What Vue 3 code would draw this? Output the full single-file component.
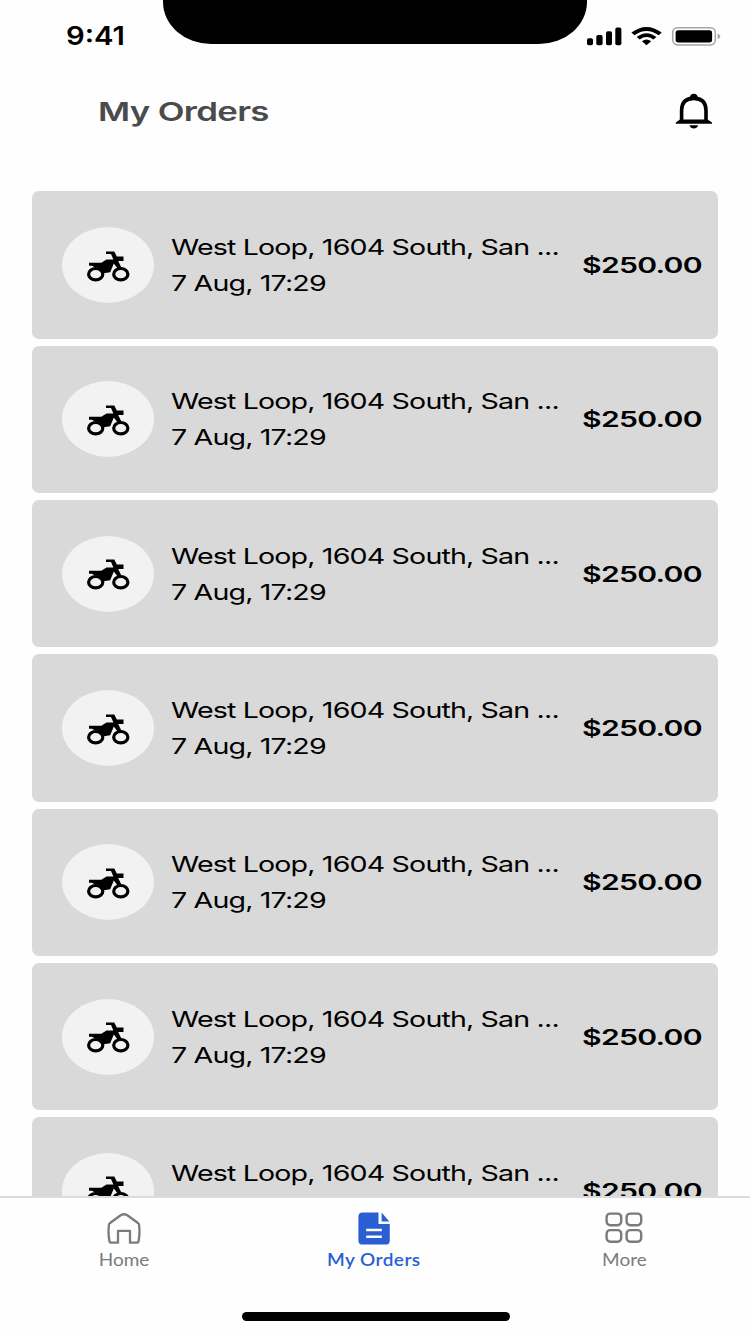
<template>
  <div class="screen">
    <header class="status-bar">
      <span class="time"><span class="stretch">9:41</span></span>
      <div class="notch"></div>
      <svg class="status-icons" viewBox="586 26 136 20" aria-hidden="true">
        <rect x="587" y="38.3" width="6" height="6.9" rx="1.8" />
        <rect x="596.3" y="35" width="6.3" height="10.2" rx="1.8" />
        <rect x="606" y="31.3" width="6" height="13.9" rx="1.8" />
        <rect x="615.3" y="27.6" width="6.1" height="17.6" rx="1.8" />
        <path d="M631.4 32.6Q646.5 21.4 661.7 32.6L658.7 35.3Q646.5 26.6 634.4 35.3Z" />
        <path d="M636.6 37Q646.5 29.3 656.5 37L653.4 39.5Q646.5 34.6 639.7 39.5Z" />
        <path d="M641.9 41.3Q646.5 37.9 651.2 41.3L646.5 45.3Z" />
        <rect x="672.7" y="27.7" width="42.6" height="17.2" rx="4.8" fill="none" stroke="#a6a6a6" stroke-width="1.5" />
        <rect x="675.6" y="30.3" width="36.5" height="12.1" rx="2.6" />
        <path d="M717.6 33.4Q720.2 34.2 720.2 36.3T717.6 39.3Z" fill="#a6a6a6" />
      </svg>
    </header>

    <div class="title-bar">
      <h1><span class="stretch">My Orders</span></h1>
      <button class="bell" aria-label="Notifications">
        <svg viewBox="675 93 38 36" aria-hidden="true">
          <path d="M681.6 121V110.5C681.6 102 686.5 98.4 693.8 98.4S706 102 706 110.5V121" fill="none" stroke="#000" stroke-width="3.6" />
          <path d="M689.6 98.5C689.6 95.6 691.2 93.8 693.8 93.8S698 95.6 698 98.5Z" />
          <path d="M680 119.6H707.6L712 122.4V123.7H675.8V122.4Z" />
          <path d="M689.5 125.2H698.1Q697 128.5 693.8 128.5T689.5 125.2Z" />
        </svg>
      </button>
    </div>

    <main class="orders">
      <article v-for="order in orders" :key="order.id" class="order">
        <div class="avatar">
          <svg viewBox="86 250 44 32" aria-hidden="true">
            <ellipse cx="95.7" cy="273.2" rx="7.1" ry="5.7" fill="none" stroke="#000" stroke-width="3.2" />
            <ellipse cx="120.8" cy="273.2" rx="7.1" ry="5.7" fill="none" stroke="#000" stroke-width="3.2" />
            <path d="M89 261.8H101.3L106.5 258.4H113.4L111 253.1H106V250.5H114.3L116.8 255.5H123.5V260H118.2L121.7 267.2L118.4 268.4L113.8 262.5L110.2 271.2L103.6 272.2L99.5 267L95 266.6L92 264.8H89Z" />
          </svg>
        </div>
        <div class="details">
          <p><span class="stretch">{{ order.address }}</span></p>
          <p><span class="stretch">{{ order.date }}</span></p>
        </div>
        <strong class="price"><span class="stretch">{{ order.price }}</span></strong>
      </article>
    </main>

    <nav class="tabs">
      <a class="tab">
        <svg viewBox="106 1213 36 33" aria-hidden="true">
          <path d="M118 1243.7V1231.9H130V1243.7H137.2Q138.2 1243.7 138.5 1242.7Q140.2 1234 139 1225.6Q138.8 1224.7 138 1224L127.3 1216.2Q124 1214.3 120.7 1216.2L110 1224Q109.2 1224.7 109 1225.6Q107.8 1234 109.5 1242.7Q109.8 1243.7 110.8 1243.7Z" fill="none" stroke="#7b7b7b" stroke-width="2.3" stroke-linejoin="round" />
        </svg>
        <span class="label"><span class="stretch">Home</span></span>
      </a>
      <a class="tab active">
        <svg viewBox="356 1212 36 33" aria-hidden="true">
          <path d="M362.6 1212.4H378.5V1224H389.8V1240.4Q389.8 1244.6 385.3 1244.6H362.8Q358.4 1244.6 358.4 1240.4V1216.5Q358.4 1212.4 362.6 1212.4Z" fill="#2a5fd3" />
          <path d="M381.6 1212.6V1221.4H389.3Z" fill="#2a5fd3" />
          <path d="M366.2 1230.1H381.8M366.2 1236.8H381.8" stroke="#fff" stroke-width="2.5" />
        </svg>
        <span class="label"><span class="stretch">My Orders</span></span>
      </a>
      <a class="tab">
        <svg class="grid-icon" viewBox="605 1213 38 32" aria-hidden="true">
          <g fill="none" stroke="#7b7b7b" stroke-width="2.4">
            <rect x="606.6" y="1214.6" width="14.6" height="11.6" rx="3.6" />
            <rect x="626.6" y="1214.6" width="14.6" height="11.6" rx="3.6" />
            <rect x="606.6" y="1231.1" width="14.6" height="11.6" rx="3.6" />
            <rect x="626.6" y="1231.1" width="14.6" height="11.6" rx="3.6" />
          </g>
        </svg>
        <span class="label"><span class="stretch">More</span></span>
      </a>
      <div class="home-indicator"></div>
    </nav>
  </div>
</template>

<script setup>
import { ref } from 'vue'

const orders = ref(
  Array.from({ length: 7 }, (_, i) => ({
    id: i + 1,
    address: 'West Loop, 1604 South, San ...',
    date: '7 Aug, 17:29',
    price: '$250.00'
  }))
)
</script>

<style>
body {
  background: #fff;
}
</style>

<style scoped>
.screen {
  display: flex;
  flex-direction: column;
  width: 750px;
  height: 1334px;
  overflow: hidden;
  background: #fefefe;
  color: #000;
  font-family: Inter, sans-serif;
}

/* wide lettering */
.stretch {
  display: inline-block;
  white-space: nowrap;
  transform-origin: left center;
}

.status-bar {
  display: flex;
  flex: none;
  height: 44px;
}

.time {
  width: 97px;
  padding-left: 66px;
  font-size: 25px;
  font-weight: 600;
  line-height: 72px;
}

.time .stretch {
  transform: scaleX(1.17);
}

.notch {
  width: 424px;
  height: 44.4px;
  background: #000;
  border-radius: 0 0 48px 48px / 0 0 42px 42px;
}

.status-icons {
  width: 136px;
  height: 20px;
  margin-top: 26px;
  margin-left: -1px;
}

.title-bar {
  display: flex;
  flex: none;
  justify-content: space-between;
  height: 147px;
  padding: 49px 37px 0 98px;
  box-sizing: border-box;
}

h1 {
  margin: 0;
  color: #4b4b4b;
  font-size: 26px;
  font-weight: 600;
  letter-spacing: -0.5px;
  line-height: 38px;
}

h1 .stretch {
  transform: scaleX(1.34);
}

.bell {
  width: 38px;
  height: 36px;
  padding: 0;
  border: none;
  background: none;
}

.bell svg {
  display: block;
}

.orders {
  display: flex;
  flex: 1;
  flex-direction: column;
  gap: 6.8px;
  min-height: 0;
  padding: 0.35px 32px 0;
  overflow: hidden;
}

.order {
  display: flex;
  flex: none;
  align-items: center;
  height: 147.53px;
  padding-left: 30px;
  box-sizing: border-box;
  border-radius: 7px;
  background: #d9d9d9;
}

.avatar {
  display: flex;
  align-items: center;
  justify-content: center;
  width: 92px;
  height: 76px;
  border-radius: 50%;
  background: #f2f2f2;
}

.avatar svg {
  width: 44px;
  height: 32px;
  margin-top: 3px;
}

.details {
  width: 412px;
  margin-left: 16.5px;
}

.details p {
  margin: 0;
  font-size: 22px;
  letter-spacing: -0.65px;
  line-height: 36px;
}

.details .stretch {
  transform: scaleX(1.3);
}

.price {
  margin-left: -0.5px;
  font-size: 21.5px;
  font-weight: 600;
  letter-spacing: -0.5px;
}

.price .stretch {
  transform: scaleX(1.4);
}

.tabs {
  display: grid;
  flex: none;
  grid-template-columns: repeat(3, 250px);
  grid-template-rows: 114px 9px;
  height: 138px;
  box-sizing: border-box;
  border-top: 2px solid #dcdcdc;
  background: #fefefe;
}

.tab {
  display: flex;
  flex-direction: column;
  align-items: center;
  padding-top: 14px;
  color: #7b7b7b;
  font-family: Lato, sans-serif;
  font-size: 16.5px;
}

.tab svg {
  width: 36px;
  height: 33px;
  margin-right: 2px;
}

.tab .grid-icon {
  width: 38px;
  height: 32px;
  margin-bottom: 1px;
}

.tab.active {
  color: #2a5fd3;
  font-weight: 600;
}

.label {
  margin-right: 2px;
  line-height: 30px;
}

.label .stretch {
  transform: scaleX(1.15);
  transform-origin: center;
}

.active .label {
  letter-spacing: 0.4px;
}

.home-indicator {
  grid-column: 1 / -1;
  width: 268px;
  margin-left: 242px;
  border-radius: 5px;
  background: #000;
}
</style>
